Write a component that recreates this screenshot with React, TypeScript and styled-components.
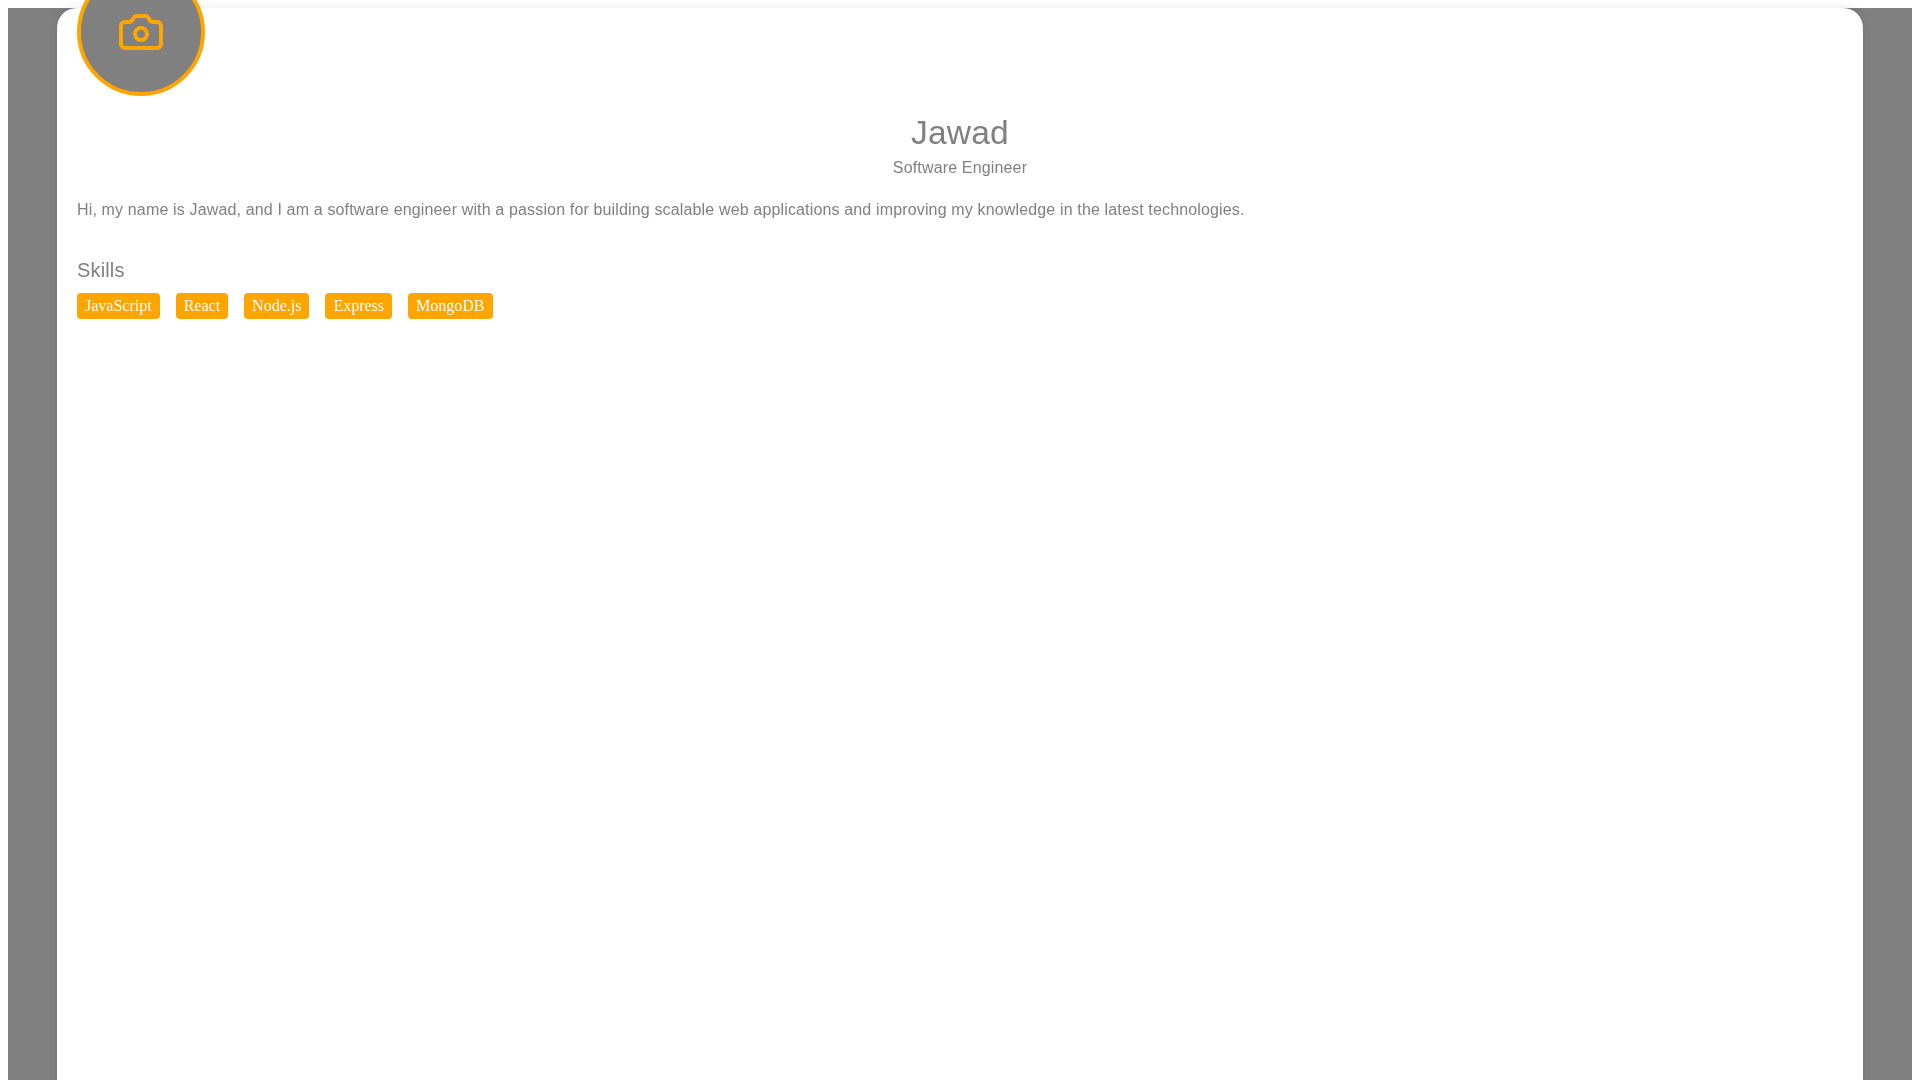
import React from "react";
import styled, { createGlobalStyle } from "styled-components";
import { Camera } from "lucide-react";

const Global = createGlobalStyle`
  html { overflow: hidden; background: #fff; }
  body { margin: 0; padding: 8px; }
`;

const Page = styled.div`
  background: #808080;
  height: 1100px;
  font-family: "Liberation Sans", Arial, sans-serif;
  color: #808080;
`;

const Card = styled.main`
  width: 1806px;
  height: 100%;
  margin: 0 auto;
  box-sizing: border-box;
  background: #fff;
  border-radius: 20px;
  box-shadow: 0 0 10px rgba(0, 0, 0, 0.1);
  padding: 1px 20px 0;
  letter-spacing: 0.01em;
  will-change: transform;
`;

const Avatar = styled.div`
  position: relative;
  z-index: 1;
  width: 128px;
  height: 128px;
  box-sizing: border-box;
  margin-top: -41px;
  border: 4px solid #ffa500;
  border-radius: 50%;
  background: #808080;
  color: #ffa500;
  display: flex;
  align-items: center;
  justify-content: center;
`;

const Header = styled.header`
  text-align: center;
  margin-top: 17px;
`;

const Name = styled.h1`
  margin: 0;
  font-size: 33.6px;
  font-weight: 400;
  line-height: 40px;
`;

const Title = styled.p`
  margin: 6px 0 0;
  font-size: 16px;
  line-height: 18px;
`;

const Bio = styled.p`
  margin: 24px 0 0;
  font-size: 16px;
  line-height: 18px;
  letter-spacing: 0.15px;
`;

const SkillsHeading = styled.h2`
  margin: 40px 0 0;
  font-size: 20px;
  font-weight: 400;
  line-height: 23px;
`;

const SkillList = styled.ul`
  display: flex;
  gap: 16px;
  list-style: none;
  margin: 11px 0 0;
  padding: 0;
`;

const Skill = styled.li`
  background: #ffa500;
  color: #fff;
  font-family: "Liberation Serif", "Times New Roman", serif;
  font-size: 16px;
  line-height: 18px;
  letter-spacing: 0;
  padding: 4px 8px;
  border-radius: 4px;
`;

const skills = ["JavaScript", "React", "Node.js", "Express", "MongoDB"];

export default function App() {
  return (
    <>
      <Global />
      <Page>
        <Card>
          <Avatar>
            <Camera size={48} strokeWidth={2} />
          </Avatar>
          <Header>
            <Name>Jawad</Name>
            <Title>Software Engineer</Title>
          </Header>
          <Bio>
            Hi, my name is Jawad, and I am a software engineer with a passion for building scalable web applications and improving my knowledge in the latest technologies.
          </Bio>
          <SkillsHeading>Skills</SkillsHeading>
          <SkillList>
            {skills.map((s) => (
              <Skill key={s}>{s}</Skill>
            ))}
          </SkillList>
        </Card>
      </Page>
    </>
  );
}
